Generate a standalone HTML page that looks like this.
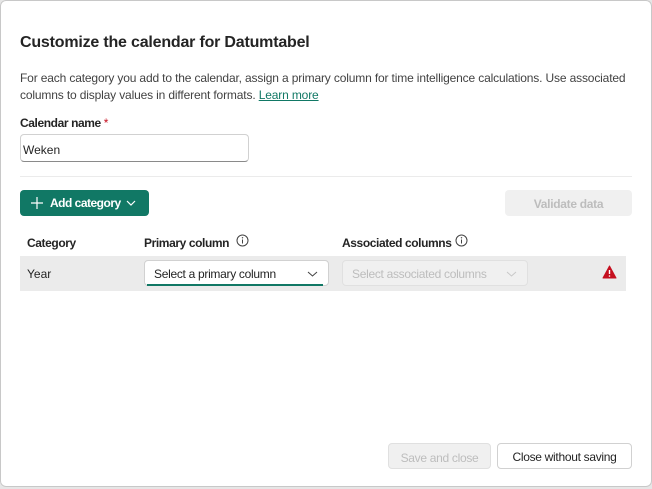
<!DOCTYPE html>
<html><head><meta charset="utf-8"><style>
*{box-sizing:border-box;margin:0;padding:0}
body{width:652px;height:489px;background:#e6e6e6;font-family:"Liberation Sans",sans-serif;color:#242424;position:relative;overflow:hidden}
.dlg{position:absolute;left:0;top:0;width:652px;height:487px;background:#fff;box-shadow:inset 0 0 0 1px #c8c8c8;border-radius:6px}
.a{position:absolute;white-space:nowrap}
h1{position:absolute;left:20px;top:34px;font-size:16px;font-weight:bold;letter-spacing:-0.2px;color:#242424}
.desc{left:20px;top:70px;font-size:12px;line-height:17px;letter-spacing:-0.15px;color:#424242}
.desc a{color:#117865;text-decoration:underline}
.lbl{font-size:12px;font-weight:bold;letter-spacing:-0.4px}
.inp{position:absolute;left:20px;top:134px;width:229px;height:28px;border:1px solid #d1d1d1;border-bottom:1px solid #8a8a8a;border-radius:4px;font-size:12px;padding:8px 0 0 2px}
.sep{position:absolute;left:20px;right:20px;top:176px;border-top:1px solid #ebebeb}
.btnp{position:absolute;left:20px;top:190px;width:129px;height:26px;background:#117865;border-radius:4px;color:#fff;font-size:12px;font-weight:bold;letter-spacing:-0.5px}
.btnd{position:absolute;background:#f0f0f0;border-radius:4px;color:#bdbdbd;font-size:12px;font-weight:bold;text-align:center;letter-spacing:-0.3px}
.row{position:absolute;left:20px;top:256px;width:606px;height:35px;background:#ebebeb}
.dd{position:absolute;top:260px;height:26px;border-radius:4px;font-size:12px;letter-spacing:-0.3px}
</style></head><body>
<div class="dlg">
<h1>Customize the calendar for Datumtabel</h1>
<div class="a desc">For each category you add to the calendar, assign a primary column for time intelligence calculations. Use associated<br>columns to display values in different formats. <a>Learn more</a></div>
<div class="a lbl" style="left:20px;top:116px">Calendar name <span style="color:#c50f1f;font-weight:normal">*</span></div>
<div class="inp">Weken</div>
<div class="sep"></div>
<div class="btnp"><svg style="position:absolute;left:10px;top:6px" width="14" height="14" viewBox="0 0 14 14"><path d="M7 1v12M1 7h12" stroke="#fff" stroke-width="1.2"/></svg><span class="a" style="left:30px;top:6px">Add category</span><svg style="position:absolute;left:106px;top:10px" width="10" height="6" viewBox="0 0 10 6"><path d="M1 1l4 4 4-4" stroke="#fff" fill="none" stroke-width="1.2"/></svg></div>
<div class="btnd" style="left:505px;top:190px;width:127px;height:26px;padding-top:7px">Validate data</div>
<div class="a lbl" style="left:27px;top:236px">Category</div>
<div class="a lbl" style="left:144px;top:236px">Primary column</div>
<svg class="a" style="left:236px;top:234px" width="13" height="13" viewBox="0 0 13 13"><circle cx="6.5" cy="6.5" r="5.5" fill="none" stroke="#424242"/><path d="M6.5 5.5v4" stroke="#424242"/><circle cx="6.5" cy="3.8" r=".7" fill="#424242"/></svg>
<div class="a lbl" style="left:342px;top:236px">Associated columns</div>
<svg class="a" style="left:455px;top:234px" width="13" height="13" viewBox="0 0 13 13"><circle cx="6.5" cy="6.5" r="5.5" fill="none" stroke="#424242"/><path d="M6.5 5.5v4" stroke="#424242"/><circle cx="6.5" cy="3.8" r=".7" fill="#424242"/></svg>
<div class="row"></div>
<div class="a" style="left:27px;top:267px;font-size:12px">Year</div>
<div class="dd" style="left:144px;width:185px;background:#fff;border:1px solid #d1d1d1"><span class="a" style="left:9px;top:6px">Select a primary column</span><svg class="a" style="left:162px;top:10px" width="11" height="6" viewBox="0 0 11 6"><path d="M1 1l4.5 4 4.5-4" stroke="#424242" fill="none"/></svg><div style="position:absolute;left:2px;right:5px;bottom:-1px;border-bottom:2px solid #117865"></div></div>
<div class="dd" style="left:342px;width:186px;background:#f0f0f0;border:1px solid #e0e0e0;color:#bdbdbd"><span class="a" style="left:9px;top:6px">Select associated columns</span><svg class="a" style="left:163px;top:10px" width="11" height="6" viewBox="0 0 11 6"><path d="M1 1l4.5 4 4.5-4" stroke="#c8c8c8" fill="none"/></svg></div>
<svg class="a" style="left:602px;top:265px" width="15" height="14" viewBox="0 0 15 14"><path d="M7.5 1L14 13H1z" fill="#c50f1f" stroke="#c50f1f" stroke-linejoin="round"/><path d="M7.5 5v4" stroke="#fff" stroke-width="1.4"/><circle cx="7.5" cy="11" r=".8" fill="#fff"/></svg>
<div class="btnd" style="left:388px;top:443px;width:103px;height:26px;padding-top:7px;border:1px solid #e0e0e0;font-weight:normal">Save and close</div>
<div class="a" style="left:497px;top:443px;width:135px;height:26px;border:1px solid #d1d1d1;border-radius:4px;font-size:12px;text-align:center;padding-top:6px;letter-spacing:-0.3px">Close without saving</div>
</div>
</body></html>
